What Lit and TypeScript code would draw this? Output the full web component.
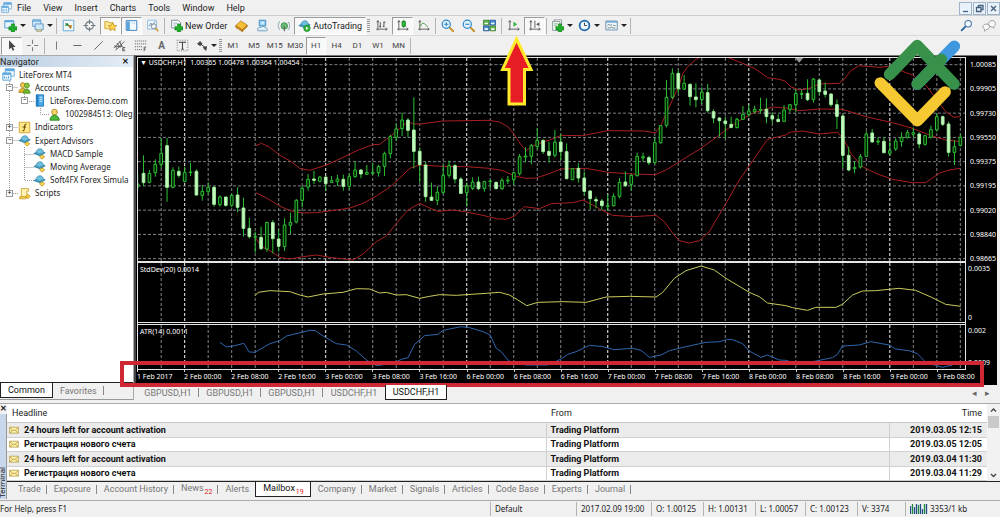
import { LitElement, html, svg, css, nothing } from "lit";
import { customElement, property } from "lit/decorators.js";
import { classMap } from "lit/directives/class-map.js";

/* ---------- icons (16 x 16 grid) ---------- */
const plus = svg`<path d="M9 6h4v3.500h3v4h-3V16H9v-2.500H6v-4h3z" fill="#1fae2b" stroke="#0b7a17" stroke-width=".7"/>`;
const cap = svg`<path d="M1 8l7-3 7 2-6 4z" fill="#4aa3c8" stroke="#1f6f94" stroke-width=".8"/><path d="M4 5.500C5 2 10 1 12 4l1 3-5 2-4-2z" fill="#6fc0de" stroke="#2a7ea5" stroke-width=".8"/>`;
const axes = svg`<path d="M3.500 2v12M1.500 12.500H15M2 4l1.500-2L5 4M13 11l2 1.500-2 1.500" fill="none" stroke="#555" stroke-width="1.100"/>`;
const lens = svg`<path d="M10 10l5 5" stroke="#c9962a" stroke-width="2.600" stroke-linecap="round"/><circle cx="6.500" cy="6.500" r="5" fill="#e3f3fd" stroke="#2f86c8" stroke-width="1.500"/>`;

const ICONS: Record<string, unknown> = {
  app: svg`<path d="M4 1h11v9H4z" fill="#fff" stroke="#4b97d2"/><path d="M4 1h11v3H4z" fill="#5da9e0"/><path d="M1 6h10v9H1z" fill="#e9f5fd" stroke="#4b97d2"/><path d="M1 6h10v2.500H1z" fill="#5da9e0"/><path d="M3 13v-3M5.500 13v-2M8 13v-3" stroke="#4b97d2"/>`,
  newChart: svg`<path d="M1 2h11v9H1z" fill="#eaf6ff" stroke="#3f8cc8"/><path d="M1 3h11" stroke="#5ca8df" stroke-width="2"/>${plus}`,
  profiles: svg`<path d="M2 1h10v8H2z" fill="#dff0fc" stroke="#4a8fc4"/><path d="M2 2.500h10" stroke="#6bb0e2" stroke-width="2"/><path d="M5 6h10v7H5z" fill="#cfe6f8" stroke="#4a8fc4"/><path d="M7 13v2h6v-2" fill="#f4e3a4" stroke="#8f8a62"/>`,
  market: svg`<path d="M1.500 1.500h13v13h-13z" fill="#f4fbff" stroke="#4b97d2"/><path d="M4 8l2.500-3 1.500 2.500z" fill="#1d9e2b" stroke="#1d9e2b"/><path d="M8 8l4 0-1.500 4z" fill="#e0a118" stroke="#c77c10"/><path d="M4 5l7 6" stroke="#557"/>`,
  target: svg`<circle cx="8" cy="8" r="4.800" fill="none" stroke="#6d7880" stroke-width="1.400"/><path d="M8 .5v5.500M8 10v5.500M.5 8H6M10 8h5.500" stroke="#6d7880" stroke-width="1.300"/>`,
  favs: svg`<path d="M1 3h4l1 1.500h5V12H1z" fill="#fbe58b" stroke="#c99c27"/><path d="M10.500 4.500l1.600 3.300 3.500.4-2.600 2.500.7 3.600-3.200-1.800-3.200 1.800.7-3.600-2.600-2.500 3.500-.4z" fill="#ffd84a" stroke="#bf8718" stroke-width=".9"/>`,
  panel: svg`<path d="M1.500 2h13v12h-13z" fill="#f3faff" stroke="#3f83bd" stroke-width="1.200"/><path d="M2 3h4v10.500H2z" fill="#5aa5de"/><path d="M8 5h5" stroke="#b6d4ea"/>`,
  tester: svg`<path d="M2 1.500h11v11H2z" fill="#eef8ff" stroke="#7fb3d9"/><path d="M4 9l2-4 2 3 3-5" fill="none" stroke="#58799a"/><circle cx="9.500" cy="9" r="3" fill="#ffffffb0" stroke="#7f8b95" stroke-width="1.200"/><path d="M12 11.500l3 3.500" stroke="#d39a2c" stroke-width="2"/>`,
  order: svg`<path d="M2 1.500h8l3 3V11H2z" fill="#fff" stroke="#6c7a86"/><path d="M4 5h5M4 7.500h3" stroke="#7f93a5"/>${plus}`,
  book: svg`<path d="M1 8l6-5.500 8 5-6 6z" fill="#f5bf3a" stroke="#a8710f" stroke-width=".9"/><path d="M1 8v2.500l8 5V13.500zM9 13.500v2l6-6V7.500z" fill="#d9912b" stroke="#a8710f" stroke-width=".8"/>`,
  server: svg`<path d="M4 1.500h8v7H4z" fill="#8fd0f5" stroke="#2b7cb8"/><path d="M6 4h4M6 6h4" stroke="#fff"/><path d="M2 14c-1-3 2-4 4-3.500 1-2 5-2 5.500.5 3 0 3.500 3 1.500 3.500H3z" fill="#dff1fb" stroke="#5a8fb3"/>`,
  signal: svg`<circle cx="9" cy="8.500" r="4" fill="#67bd72" stroke="#3d8d4b"/><path d="M3.500 3C1 6 1 10 3.500 13M14 3.500c2 3 2 7-.5 10" fill="none" stroke="#9ab4bd" stroke-width="1.300"/><path d="M9 8.500V15" stroke="#666" stroke-width="1.300"/>`,
  auto: svg`${cap}<circle cx="11" cy="11.500" r="4" fill="#2fb33c" stroke="#127d20" stroke-width=".7"/><path d="M9.800 9.500v4l3.200-2z" fill="#fff"/>`,
  bars: svg`${axes}<path d="M6.500 4v7M6.500 9H5M11 3v7M11 4h1.800M11 9H9.500" stroke="#555" stroke-width="1.200"/>`,
  candles: svg`${axes}<path d="M9.500 1v10" stroke="#0c7a18"/><path d="M7.500 3h4v6h-4z" fill="#2fbb3d" stroke="#0c7a18"/>`,
  line: svg`${axes}<path d="M4 9c3-6 5-4 9 .5" fill="none" stroke="#2f9a3b" stroke-width="1.200"/>`,
  zoomIn: svg`${lens}<path d="M4 6.500h5M6.500 4v5" stroke="#2f86c8" stroke-width="1.400"/>`,
  zoomOut: svg`${lens}<path d="M4 6.500h5" stroke="#2f86c8" stroke-width="1.400"/>`,
  tile: svg`<path d="M.5 1.500h7v6h-7zM8.500 8.500h7v6h-7z" fill="#5fb84b" stroke="#3a7a2c"/><path d="M8.500 1.500h7v6h-7zM.5 8.500h7v6h-7z" fill="#4c93d8" stroke="#234f86"/><path d="M2 5.500h4M10 5.500h4M2 12.500h4M10 12.500h4" stroke="#fff" stroke-width="2"/>`,
  scroll: svg`${axes}<path d="M8 3.500v6l4.500-3z" fill="#2fae3a"/>`,
  shift: svg`${axes}<path d="M8.500 2v9" stroke="#444"/><path d="M14 4v5l-4-2.500z" fill="#555"/>`,
  indic: svg`<path d="M4 1h9v11H4z" fill="#fff" stroke="#7a8791"/><path d="M2 3h9v11H2z" fill="#f6fbf4" stroke="#7a8791"/><path d="M4 6h4M4 8.500h3" stroke="#4a9a55"/>${plus}`,
  clock: svg`<circle cx="8" cy="8" r="6" fill="#eef8ff" stroke="#1f66ad" stroke-width="2.200"/><path d="M8 4.500V8h3" fill="none" stroke="#345" stroke-width="1.200"/>`,
  template: svg`<path d="M1 2.500h14v11H1z" fill="#eef7fd" stroke="#557f9f"/><path d="M1 3.500h14" stroke="#6fa9d4" stroke-width="2"/><path d="M3 8l2-1.500L7 8l2-1.500M10 8h3M3 11h3l2-1 2 1h3" fill="none" stroke="#566" stroke-width=".9"/>`,
  search: svg`<path d="M7 9l-5 5" stroke="#2c5f9e" stroke-width="2.200" stroke-linecap="round"/><circle cx="10" cy="5.800" r="4" fill="#f5fbff" stroke="#3f72ad" stroke-width="1.300"/>`,
  chat: svg`<path d="M10 2c4-1 6 2 5 4.500-.5 1.500-1.500 2-1.500 2v2L11.500 9C7 9 6.500 3.500 10 2z" fill="#fafafa" stroke="#8a8a8a" stroke-width=".9"/><path d="M3.500 6C7 5 9 7 8.500 9.500 8 12 6 12 5 12l-2 2v-2.500C0 10.500.5 7 3.500 6z" fill="#fafafa" stroke="#8a8a8a" stroke-width=".9"/>`,
  pointer: svg`<path d="M5 1.500v11.500l2.700-2.500 1.800 4 2-.9-1.800-3.800h3.500z" fill="#444"/>`,
  cross: svg`<path d="M8 1v5M8 10v5M1 8h5M10 8h5" stroke="#7d7d7d" stroke-width="1.300"/>`,
  vline: svg`<path d="M8 3v10" stroke="#777" stroke-width="1.200"/>`,
  hline: svg`<path d="M3 8h10" stroke="#666" stroke-width="1.300"/>`,
  trend: svg`<path d="M3 13L13 3" stroke="#666" stroke-width="1.200"/>`,
  channel: svg`<path d="M1 11l9-9M3 14L14 3M2 8l3 4M5 5l4 6M8 3l3 6M3 9h9" stroke="#444" fill="none"/><path d="M15 10.500h-3v4h3M12 12.500h2.500" stroke="#444" fill="none"/>`,
  fibo: svg`<path d="M1 2.500h14M1 6h14M1 9.500h9M1 13h9" stroke="#555" stroke-dasharray="1.500 1"/><path d="M15 10h-2.500v5M12.500 12.500h2" stroke="#444" fill="none"/>`,
  label: svg`<path d="M1.500 1.500h13v13h-13z" fill="none" stroke="#777" stroke-dasharray="1.500 1.500"/><path d="M4.500 5V4h7v1M8 4v8.500M6.500 12.500h3" fill="none" stroke="#444" stroke-width="1.300"/>`,
  arrows: svg`<path d="M2 6l3-3 2.500 3L5 8zM5 6l6 4M9 10.500l4-1-1 4.500z" fill="#444" stroke="#444" stroke-width="1.200"/>`,
  accounts: svg`<circle cx="6" cy="5" r="3" fill="#f3c94b" stroke="#a5821a"/><path d="M1 14c0-6 9-7 10 0z" fill="#e9b52e" stroke="#a5821a"/><circle cx="11" cy="5.500" r="3" fill="#8cc63e" stroke="#4f8d1c"/><path d="M6.500 15c0-7 8-7 8.500 0z" fill="#6fb52c" stroke="#4f8d1c"/>`,
  host: svg`<path d="M4 1h9v14H4z" fill="#45a8e6" stroke="#1c6fae"/><path d="M4 1h2.500v14H4z" fill="#1f7cc0"/><path d="M8 4h3.500M8 6.500h3.500M8 9h3.500" stroke="#dff3ff" stroke-width="1.200"/>`,
  user: svg`<circle cx="8" cy="5" r="3.500" fill="#f6d36a" stroke="#a5821a"/><path d="M2.500 15c0-8 11-8 11.500 0z" fill="#4cb83a" stroke="#23801b"/>`,
  fx: svg`<path d="M1.500 1.500h13v13h-13z" fill="#ffe88a" stroke="#c79a1e"/><path d="M10.500 4c-2-.5-2.200 1-2.500 4s-.5 4.500-2.500 4M5.500 7.500h4.500" fill="none" stroke="#6a4a00" stroke-width="1.300"/>`,
  expert: svg`${cap}<path d="M11 9.500l3.500 2.500-3.500 3-3-3z" fill="#f8d451" stroke="#b98a17" stroke-width=".9"/>`,
  script: svg`<path d="M4 2h9v3h-2v7H4z" fill="#fff3b8" stroke="#c79a1e"/><path d="M2 12h8v2.500H2z" fill="#f7d75e" stroke="#c79a1e"/><path d="M12 9l3 2.500-3 3-2.500-3z" fill="#f8c93a" stroke="#b98a17" stroke-width=".9"/>`,
  mail: svg`<path d="M1 3.500h14V13H1z" fill="#fdf0a8" stroke="#a3862c"/><path d="M1 13l5-4.500h4l5 4.500M1 4l5 4.500M15 4l-5 4.500" fill="none" stroke="#a3862c"/>`,
};

@customElement("mt-icon")
class MtIcon extends LitElement {
  @property() name = "";
  static styles = css`
    :host { display: block; flex: none; width: 13px; height: 13px; }
    svg { display: block; width: 100%; height: 100%; }
  `;
  render() {
    return html`<svg viewBox="0 0 16 16" aria-hidden="true">${ICONS[this.name]}</svg>`;
  }
}

/* ---------- market data, in thirds of a pixel on the plot ---------- */
/* high, body top, body bottom, low; 1 = bearish (filled) */
const CANDLES: number[][] = [
  [370,402,410,420,0],[316,370,398,408,1],[360,370,397,400,0],[328,343,368,380,0],[264,310,343,355,0],[264,287,412,455,1],[352,361,412,415,0],[350,364,376,383,1],
  [350,367,394,397,0],[338,366,368,378,0],[358,364,435,437,1],[405,424,436,452,0],[397,412,425,432,0],[408,412,463,470,1],[436,441,464,470,0],[441,441,466,470,1],
  [432,436,466,472,0],[412,435,472,487,1],[443,474,535,560,1],[503,535,560,566,1],[545,560,562,608,0],[530,562,596,600,1],[516,517,597,605,0],[510,518,566,610,1],
  [538,567,589,605,1],[505,525,590,603,0],[488,517,526,552,0],[447,451,516,520,0],[408,415,451,472,0],[372,388,411,422,0],[362,387,391,402,1],[378,381,394,397,0],
  [380,381,401,422,1],[378,392,397,399,0],[374,387,395,408,0],[374,388,409,422,1],[370,380,409,420,0],[334,360,380,383,0],[357,360,372,385,1],[345,367,373,375,0],
  [338,367,370,375,0],[345,349,368,380,0],[305,311,349,378,0],[254,260,311,325,0],[222,237,262,273,0],[188,210,236,258,0],[204,210,241,262,1],[142,240,304,355,1],
  [292,304,344,398,1],[335,345,440,455,1],[398,441,451,453,1],[408,427,451,465,0],[345,376,427,432,0],[332,347,376,383,0],[342,347,387,400,1],[381,387,430,432,1],
  [398,408,428,470,0],[382,396,415,420,0],[380,396,416,420,1],[392,395,416,425,0],[388,393,395,415,0],[395,397,416,418,1],[384,391,416,420,0],[378,390,393,402,0],
  [365,368,389,405,0],[312,320,371,377,0],[292,318,321,337,0],[282,287,319,343,0],[235,271,290,298,0],[268,271,305,312,1],[275,304,316,338,1],[240,276,316,322,0],
  [252,276,305,330,1],[280,305,386,388,1],[355,356,389,391,0],[340,355,384,398,1],[365,384,424,437,1],[420,423,446,478,1],[440,449,453,475,1],[447,453,467,480,1],
  [432,467,470,483,0],[430,439,467,470,0],[384,397,439,445,0],[364,396,407,411,1],[375,376,403,422,0],[308,319,377,380,0],[308,320,324,335,0],[317,323,338,345,1],
  [262,278,338,343,0],[225,227,278,281,0],[90,142,226,232,0],[55,70,142,147,0],[62,70,116,130,1],[75,100,117,120,0],[100,103,140,167,1],[100,141,149,172,1],
  [112,126,149,162,0],[102,128,182,188,1],[178,185,204,220,1],[202,204,212,260,1],[200,213,221,265,1],[200,223,232,235,1],[203,208,233,235,0],[168,193,208,210,0],
  [165,183,193,200,0],[167,178,185,190,0],[143,178,181,190,0],[145,178,200,220,1],[187,197,207,220,1],[193,208,215,216,1],[165,180,214,217,0],[163,164,179,187,0],
  [118,130,164,187,0],[118,130,133,147,0],[88,130,149,153,1],[84,87,149,158,0],[88,90,125,135,1],[98,123,133,142,1],[130,132,164,170,1],[148,164,199,237,1],
  [193,198,316,355,1],[290,316,360,364,1],[335,352,356,370,0],[312,320,351,356,0],[244,252,319,320,0],[237,249,276,278,1],[262,273,276,285,0],[262,274,308,310,1],
  [272,302,310,318,0],[265,273,297,303,0],[247,262,275,290,0],[240,248,263,265,0],[232,248,253,262,0],[247,252,282,295,1],[255,257,283,287,0],[227,239,262,265,0],
  [190,200,240,245,0],[197,200,223,228,1],[215,222,307,320,1],[270,290,307,345,0],[252,262,286,290,0],
];
const UPPER = "354,287 371,280 396,292 426,316 456,332 486,355 516,361 566,345 616,322 666,298 706,284 726,283 776,245 811,215 828,222 848,222 916,213 1056,211 1086,216 1111,230 1131,255 1151,285 1166,302 1186,288 1216,276 1236,270 1271,256 1336,257 1411,242 1521,243 1554,249 1571,225 1596,170 1626,105 1636,72 1651,50 1676,28 1700,14 1740,10 1776,24 1826,44 1856,58 1891,83 1926,88 1941,92 1961,110 1986,120 2016,115 2046,102 2106,100 2121,88 2141,62 2166,47 2226,52 2266,48 2286,60 2326,75 2366,105 2396,145 2426,185 2451,202 2470,200";
const MIDDLE = "354,428 386,444 426,468 456,482 496,489 536,488 596,480 636,474 676,460 716,438 756,412 786,385 816,355 846,345 916,349 986,350 1056,355 1096,362 1131,378 1166,385 1196,384 1226,374 1271,357 1346,355 1411,367 1486,372 1554,374 1586,360 1626,335 1686,298 1726,270 1766,240 1806,212 1846,190 1906,171 1956,175 1986,182 2046,177 2116,178 2186,200 2266,218 2326,235 2386,258 2426,270 2470,275";
const LOWER = "352,562 371,590 396,602 426,622 456,627 496,620 536,615 576,622 646,630 676,612 716,575 746,558 776,520 811,480 846,460 876,474 901,484 946,480 986,486 1036,496 1076,506 1106,508 1131,498 1161,470 1206,476 1241,461 1306,458 1336,450 1366,465 1396,482 1426,496 1486,500 1556,496 1581,515 1606,550 1626,572 1656,579 1686,572 1716,545 1766,460 1806,390 1841,340 1891,268 1946,255 1956,247 1996,243 2046,252 2101,247 2121,270 2141,310 2176,350 2216,370 2266,388 2326,398 2366,398 2406,370 2436,360 2470,355";
const STDDEV = "352,122 361,112 396,107 456,110 486,120 511,126 556,117 616,112 656,101 696,102 726,114 746,112 776,120 806,119 846,130 876,124 906,119 956,121 1046,115 1086,112 1116,120 1141,135 1168,152 1201,142 1276,140 1346,142 1406,126 1476,124 1556,126 1576,112 1611,70 1646,47 1691,33 1731,45 1766,70 1836,112 1866,125 1891,144 1946,152 1966,158 2011,166 2036,157 2096,157 2116,148 2146,120 2176,108 2216,107 2286,100 2336,106 2386,128 2426,148 2471,154";
const ATR = "246,262 266,276 291,272 318,265 334,291 351,292 396,266 426,257 446,243 516,226 533,227 556,243 596,266 626,270 656,288 686,315 716,332 766,325 791,313 811,308 831,268 861,242 901,238 916,226 971,215 996,218 1036,230 1058,240 1076,280 1091,290 1114,318 1166,330 1231,330 1271,312 1291,298 1316,290 1356,271 1396,275 1430,284 1486,280 1511,286 1536,307 1571,300 1596,287 1646,275 1706,262 1746,260 1771,253 1786,254 1816,266 1836,288 1871,307 1891,300 1926,315 1946,316 1986,328 2036,318 2086,308 2101,298 2116,273 2166,270 2201,260 2256,270 2276,282 2316,287 2341,296 2366,322 2416,337 2446,330";

const PRICES = ["1.00085", "0.99905", "0.99730", "0.99550", "0.99375", "0.99195", "0.99020", "0.98840", "0.98665"];
const TIMES = ["1 Feb 2017", "2 Feb 00:00", "2 Feb 08:00", "2 Feb 16:00", "3 Feb 00:00", "3 Feb 08:00", "3 Feb 16:00", "6 Feb 00:00", "6 Feb 08:00", "6 Feb 16:00", "7 Feb 00:00", "7 Feb 08:00", "7 Feb 16:00", "8 Feb 00:00", "8 Feb 08:00", "8 Feb 16:00", "9 Feb 00:00", "9 Feb 08:00"];

@customElement("price-chart")
class PriceChart extends LitElement {
  static styles = css`
    :host { display: block; background: #000; color: #fff; font: 7px/10px "Noto Sans", sans-serif; border-top: 1px solid #777; border-left: 2px solid #444; padding: 1px 0 0 1px; }
    .row { display: grid; grid-template-columns: minmax(0, 1fr) 31px; }
    .plot { position: relative; border: 0 solid #e4e4e4; border-width: 0 1px 2px 1px; }
    .price .plot { border-top-width: 1px; }
    .std .plot { border-bottom: 3px double #e4e4e4; }
    .atr .plot { border-bottom-width: 1px; }
    .plot svg { display: block; width: 100%; height: 203px; }
    .std .plot svg { height: 59px; }
    .atr .plot svg { height: 44px; }
    .caption { position: absolute; left: 2px; top: 0; white-space: pre; }
    .std .caption, .atr .caption { top: 2px; }
    .scale { display: flex; flex-direction: column; justify-content: space-between; line-height: 4px; padding: 6px 0 2px 4px; }
    .std .scale, .atr .scale { padding: 4px 0 5px 2px; }
    .times { display: grid; grid-template-columns: repeat(17, 5.68%) auto; height: 15px; }
    .times span { white-space: nowrap; line-height: 13px; position: relative; }
    .times span::before { content: ""; position: absolute; left: 0; top: 0; width: 1px; height: 2px; background: #ccc; }
    .g, .h, .day, .c, .ln { vector-effect: non-scaling-stroke; fill: none; }
    .g, .h, .day { shape-rendering: crispEdges; }
    .g { stroke: #858585; stroke-dasharray: 3 2; }
    .h { stroke: #7c8288; stroke-dasharray: 3 2; }
    .day { stroke: #f4f4f4; stroke-dasharray: 3 2; }
    .c { stroke: #2cc135; }
    .up { fill: #020; }
    .down { fill: #c6fac1; stroke: #a4f0a0; }
    .red { stroke: #a81f22; }
    .yel { stroke: #c9cc5c; }
    .blue { stroke: #2f66ad; }
  `;
  private grid(top: number, bottom: number) {
    return Array.from({ length: 35 }, (_, i) => {
      const x = (i + 1) * 70.6 - 1;
      return svg`<path class=${(i + 1) % 6 === 2 ? "day" : "g"} d="M${x} ${top}V${bottom}"/>`;
    });
  }
  render() {
    return html`
      <div class="row price">
        <div class="plot">
          <svg viewBox="0 24 2484 609" preserveAspectRatio="none" role="img" aria-label="USDCHF hourly candles">
            ${this.grid(24, 633)}
            ${PRICES.map((_, i) => svg`<path class="h" d="M${i === 0 ? 500 : 0} ${44 + i * 72.750}H2484"/>`)}
            ${[UPPER, MIDDLE, LOWER].map((p) => svg`<polyline class="ln red" points=${p}/>`)}
            ${CANDLES.map(([hi, a, b, lo, bear], i) => {
              const x = i * 17.650 - 1;
              return svg`<path class="c" d="M${x} ${hi}V${a}M${x} ${b}V${lo}"/><path class=${bear ? "c down" : "c up"} d="M${x - 4} ${a}h8V${b}h-8z"/>`;
            })}
            <path d="M1974 24h24l-12 14z" fill="#999"/>
          </svg>
          <div class="caption">▼ USDCHF,H1  1.00365 1.00478 1.00364 1.00454</div>
        </div>
        <div class="scale">${PRICES.map((p) => html`<span>${p}</span>`)}</div>
      </div>
      <div class="row std">
        <div class="plot">
          <svg viewBox="0 24 2484 177" preserveAspectRatio="none" role="img" aria-label="Standard deviation">
            ${this.grid(24, 201)}<polyline class="ln yel" points=${STDDEV}/>
          </svg>
          <div class="caption">StdDev(20) 0.0014</div>
        </div>
        <div class="scale"><span>0.0035</span><span>0</span></div>
      </div>
      <div class="row atr">
        <div class="plot">
          <svg viewBox="0 210 2484 132" preserveAspectRatio="none" role="img" aria-label="Average true range">
            ${this.grid(210, 342)}<polyline class="ln blue" points=${ATR}/>
          </svg>
          <div class="caption">ATR(14) 0.0011</div>
        </div>
        <div class="scale"><span>0.002</span><span>0.0009</span></div>
      </div>
      <div class="row"><div class="times">${TIMES.map((t) => html`<span>${t}</span>`)}</div></div>
    `;
  }
}

/* ---------- window data ---------- */
type Tool = [string, string, string?];
const SEP: Tool = ["|", ""];
const GRIP: Tool = [":", ""];
const TOOLS: Tool[] = [
  ["newChart", "New chart", "drop"], ["profiles", "Profiles", "drop"], SEP,
  ["market", "Market Watch"], ["target", "Data Window"], ["favs", "Navigator", "on"], ["panel", "Terminal", "on"], ["tester", "Strategy Tester"], SEP,
  ["order", "New Order", "text"], ["book", "MetaEditor"], ["server", "Hosting"], ["signal", "Signals"], ["auto", "AutoTrading", "text on"], GRIP,
  ["bars", "Bar Chart"], ["candles", "Candlesticks", "on"], ["line", "Line Chart"], SEP,
  ["zoomIn", "Zoom In"], ["zoomOut", "Zoom Out"], ["tile", "Tile Windows"], SEP,
  ["scroll", "Auto Scroll"], ["shift", "Chart Shift", "on"], SEP,
  ["indic", "Indicators", "drop"], ["clock", "Periods", "drop"], ["template", "Templates", "drop"], SEP,
];
const DRAW: Tool[] = [
  ["pointer", "Cursor", "on"], ["cross", "Crosshair"], SEP,
  ["vline", "Vertical Line"], ["hline", "Horizontal Line"], ["trend", "Trendline"], ["channel", "Equidistant Channel"], ["fibo", "Fibonacci"],
  ["", "A", "glyph"], ["label", "Text Label"], ["arrows", "Arrows", "drop"], GRIP,
];
const NODES: [number, string, string, string?][] = [
  [0, "app", "LiteForex MT4"], [1, "accounts", "Accounts", "−"], [2, "host", "LiteForex-Demo.com", "−"], [3, "user", "1002984513: Oleg"],
  [1, "fx", "Indicators", "+"], [1, "expert", "Expert Advisors", "−"], [2, "expert", "MACD Sample"], [2, "expert", "Moving Average"],
  [2, "expert", "Soft4FX Forex Simula"], [1, "script", "Scripts", "+"],
];
const MAILS = [
  ["24 hours left for account activation", "Trading Platform", "2019.03.05 12:15"],
  ["Регистрация нового счета", "Trading Platform", "2019.03.05 12:05"],
  ["24 hours left for account activation", "Trading Platform", "2019.03.04 11:30"],
  ["Регистрация нового счета", "Trading Platform", "2019.03.04 11:29"],
];
const TERM_TABS: [string, string?][] = [["Trade"], ["Exposure"], ["Account History"], ["News", "22"], ["Alerts"], ["Mailbox", "19"], ["Company"], ["Market"], ["Signals"], ["Articles"], ["Code Base"], ["Experts"], ["Journal"]];
const BARS = [8, 10, 7, 10, 9, 10, 5, 10, 10];

@customElement("app-root")
class AppRoot extends LitElement {
  static styles = css`
    :host { display: block; position: relative; overflow: hidden; background: #f0f0f0; color: #1c1c1c; font: 9px/12px Roboto, sans-serif; }
    * { box-sizing: border-box; }
    button { font: inherit; color: inherit; background: none; border: 0; padding: 0; margin: 0; white-space: nowrap; }
    .menubar { display: flex; align-items: center; gap: 12px; height: 15px; padding-left: 1px; }
    .menubar mt-icon { width: 11px; height: 11px; margin-right: -7px; }
    .wins { display: flex; gap: 1px; margin-left: auto; padding-top: 1px; }
    .wins button { width: 13px; height: 13px; border: 1px solid #9db4cb; background: #e9f2fb; }
    .wins svg { display: block; width: 11px; height: 11px; }
    .tools { display: flex; align-items: center; height: 20px; border-top: 1px solid #ccc; padding-left: 1px; }
    .draw { border-top-color: #dadada; }
    .tool { display: flex; align-items: center; justify-content: center; width: 21px; height: 18px; border: 1px solid transparent; }
    .drop { width: 27px; gap: 3px; justify-content: flex-start; padding-left: 2px; }
    .draw .drop { width: 25px; gap: 2px; }
    .drop::after { content: ""; border: 3px solid transparent; border-top: 3px solid #222; border-bottom: 0; }
    .text { width: auto; gap: 2px; padding: 0 3px; }
    .on { background: #f8f8f8; border-color: #9b9b9b #fff #fff #9b9b9b; }
    .glyph { font: 700 10px/14px Roboto, sans-serif; color: #666; }
    .sep { width: 1px; height: 16px; background: #b4b4b4; margin: 0 1px; }
    .grip { width: 3px; height: 14px; margin: 0 1px; background: repeating-linear-gradient(#999 0 1px, transparent 1px 2px); }
    .right { display: flex; gap: 8px; margin-left: auto; padding-right: 3px; }
    .right mt-icon:last-child { width: 16px; height: 14px; }
    .periods { display: flex; width: 186px; font-size: 8px; color: #444; }
    .periods button { flex: 1; height: 18px; border: 1px solid transparent; }
    .periods .on { border-color: #9b9b9b #fff #fff #9b9b9b; }

    .work { display: grid; grid-template-columns: 134px minmax(0, 1fr) 3px; }
    .nav { display: flex; flex-direction: column; border-right: 1px solid #aaa; border-top: 1px solid #aaa; background: #fff; min-width: 0; margin-bottom: 3px; }
    .title { display: flex; justify-content: space-between; align-items: center; height: 11px; padding: 0 4px 0 0; background: linear-gradient(90deg, #bccfe2, #e4edf6); }
    .title button { font-weight: 700; font-size: 8px; }
    .tree { position: relative; display: grid; grid-auto-rows: 1fr; height: 132px; margin: 1px 0 0; padding: 0; list-style: none; flex: none; font: 8px/12px "Noto Sans", sans-serif; }
    .tree li { display: flex; align-items: center; gap: 4px; white-space: nowrap; position: relative; }
    .l0 { padding-left: 2px; }
    .l1 { padding-left: 18px; }
    .l2 { padding-left: 33px; }
    .l3 { padding-left: 48px; }
    .lines { position: absolute; left: 0; top: 0; width: 60px; height: 132px; }
    .exp { position: absolute; width: 7px; height: 7px; border: 1px solid #9a9a9a; background: #fff; font: 7px/5px Roboto, sans-serif; }
    .l1 .exp { left: 6px; }
    .l2 .exp { left: 21px; }
    .tabs { display: flex; background: #f0f0f0; color: #777; align-items: stretch; }
    .tabs button { height: 15px; padding: 0 7px; position: relative; }
    .tabs button::after { content: ""; position: absolute; right: 0; top: 3px; height: 9px; width: 1px; background: #888; }
    .tabs .cur { background: #fff; color: #111; border: 1px solid #222; border-top: 0; }
    .tabs .cur::after, .tabs .prev::after { display: none; }
    .navtabs { margin-top: auto; border-top: 1px solid #222; height: 18px; border-bottom: 1px solid #999; }
    .charttabs { padding: 0 3px; height: 18px; }
    .charttabs button { width: 62px; padding: 0; }
    .charttabs .arrow { width: 13px; color: #666; }
    .charttabs .arrow::after { display: none; }
    .charttabs .first { margin-left: auto; }
    .mark { position: absolute; left: -14px; right: 13px; bottom: -2px; height: 26px; border: 4px solid #cf2734; }
    .chartbox { position: relative; }

    .term { display: grid; grid-template-columns: 7px minmax(0, 1fr); border-top: 1px solid #aaa; }
    .side { display: flex; flex-direction: column; background: #c7d8ea; align-items: center; justify-content: space-between; border-right: 1px solid #999; }
    .side button { font: 700 8px/10px Roboto, sans-serif; background: #f0f0f0; width: 7px; }
    .side span { writing-mode: vertical-rl; transform: rotate(180deg); font-size: 8px; line-height: 8px; }
    .list { display: grid; grid-template-columns: minmax(0, 1fr) 13px; border-bottom: 1px solid #222; background: #fff; }
    table { width: 100%; border-collapse: collapse; table-layout: fixed; }
    th { font-weight: 400; text-align: left; height: 18px; padding: 0 5px; border-bottom: 1px solid #c8c8c8; }
    td { height: 15px; padding: 0 4px; font-weight: 700; border-bottom: 1px solid #d0d0d0; border-left: 1px solid #d0d0d0; color: #111; }
    td:first-child { border-left: 0; }
    th:first-child { width: 55%; }
    th:nth-child(2) { width: 35%; }
    th:last-child, td:last-child { text-align: right; padding-right: 5px; }
    tr:nth-child(odd) td { background: #ebebeb; }
    tr:nth-child(even) td { height: 14px; }
    td:first-child, th:first-child { padding-left: 5px; }
    .cell { display: flex; align-items: center; gap: 5px; margin-left: -3px; }
    .cell mt-icon { width: 10px; height: 10px; }
    .bar { display: flex; flex-direction: column; background: #f2f2f2; align-items: center; }
    .bar svg { width: 11px; height: 12px; }
    .bar i { width: 11px; height: 12px; background: #c9c9c9; margin-bottom: auto; }
    .termtabs { height: 17px; padding-left: 4px; }
    .termtabs button { padding: 0 6px 0 7px; }
    sub { font-size: 7px; line-height: 7px; color: #d22; vertical-align: -3px; margin-left: 1px; }
    .status { display: grid; grid-template-columns: minmax(0, 490fr) 86fr 75fr 52fr 52fr 50fr 52fr 48fr 95fr; height: 17px; margin-top: 1px; border-top: 1px solid #aaa; align-items: center; white-space: nowrap; font: 8px/14px "Noto Sans", sans-serif; }
    .status span { border-left: 1px solid #b4b4b4; padding-left: 4px; display: flex; align-items: center; gap: 2px; }
    .status span:first-child { border: 0; padding: 0; }
    .status svg { width: 18px; height: 10px; }

    .pin { position: absolute; left: 500px; top: 34px; width: 34px; height: 72px; pointer-events: none; }
    .logo { position: absolute; right: 38px; top: 38px; width: 88px; height: 90px; pointer-events: none; }
  `;

  private tool([name, label, kind = ""]: Tool) {
    if (name === "|") return html`<span class="sep"></span>`;
    if (name === ":") return html`<span class="grip"></span>`;
    const has = (k: string) => kind.includes(k);
    return html`<button class=${classMap({ tool: true, on: has("on"), drop: has("drop"), text: has("text"), glyph: has("glyph") })} aria-label=${label}>
      ${has("glyph") ? label : html`<mt-icon name=${name}></mt-icon>`}${has("text") ? label : nothing}
    </button>`;
  }

  render() {
    return html`
      <nav class="menubar">
        <mt-icon name="app"></mt-icon>
        ${["File", "View", "Insert", "Charts", "Tools", "Window", "Help"].map((m) => html`<button>${m}</button>`)}
        <div class="wins">
          ${["M3 8.500h5", "M4.500 4V2.500h4.500v4H7.500M2.500 4.500h4.500v4H2.500z", "M3 3l5 5M8 3L3 8"].map((d, i) => html`
            <button aria-label=${["Minimize", "Restore", "Close"][i]}><svg viewBox="0 0 11 11"><path d=${d} fill="none" stroke="#44607c" stroke-width="1.300"/></svg></button>`)}
        </div>
      </nav>
      <div class="tools">${TOOLS.map((t) => this.tool(t))}
        <div class="right"><mt-icon name="search"></mt-icon><mt-icon name="chat"></mt-icon></div>
      </div>
      <div class="tools draw">${DRAW.map((t) => this.tool(t))}
        <div class="periods">${["M1", "M5", "M15", "M30", "H1", "H4", "D1", "W1", "MN"].map((p) => html`<button class=${p === "H1" ? "on" : ""}>${p}</button>`)}</div>
        <span class="sep"></span>
      </div>

      <div class="work">
        <aside class="nav">
          <div class="title"><span>Navigator</span><button aria-label="Close navigator">✕</button></div>
          <ul class="tree">
            <svg class="lines" viewBox="0 0 60 132"><path d="M9.500 13V125.500H18M9.500 19.500H18M9.500 59.500H18M9.500 72.500H18M24.500 26V33.500H34M40.500 40V46.500H49M24.500 79V112.500H34M24.500 86.500H34M24.500 99.500H34" fill="none" stroke="#999" stroke-dasharray="1 1"/></svg>
            ${NODES.map(([lvl, icon, text, exp]) => html`<li class="l${lvl}">${exp ? html`<button class="exp" aria-label="Toggle ${text}">${exp}</button>` : nothing}<mt-icon name=${icon}></mt-icon><span>${text}</span></li>`)}
          </ul>
          <div class="tabs navtabs"><button class="cur">Common</button><button>Favorites</button></div>
        </aside>
        <div>
          <div class="chartbox"><price-chart></price-chart><div class="mark"></div></div>
          <div class="tabs charttabs">
            ${["GBPUSD,H1", "GBPUSD,H1", "GBPUSD,H1", "USDCHF,H1", "USDCHF,H1"].map((t, i) => html`<button class=${i === 4 ? "cur" : i === 3 ? "prev" : ""}>${t}</button>`)}
            <button class="arrow first" aria-label="Previous">◂</button><button class="arrow" aria-label="Next">▸</button>
          </div>
        </div>
      </div>

      <section class="term">
        <div class="side"><button aria-label="Close terminal">✕</button><span>Terminal</span></div>
        <div>
          <div class="list">
            <table>
              <thead><tr><th>Headline</th><th>From</th><th>Time</th></tr></thead>
              <tbody>${MAILS.map(([h, f, t]) => html`<tr><td><div class="cell"><mt-icon name="mail"></mt-icon>${h}</div></td><td>${f}</td><td>${t}</td></tr>`)}</tbody>
            </table>
            <div class="bar">
              <svg viewBox="0 0 11 12"><path d="M3 7.500L5.500 5 8 7.500" fill="none" stroke="#444" stroke-width="1.300"/></svg><i></i>
              <svg viewBox="0 0 11 12"><path d="M3 5l2.500 2.500L8 5" fill="none" stroke="#444" stroke-width="1.300"/></svg>
            </div>
          </div>
          <div class="tabs termtabs">${TERM_TABS.map(([t, n]) => html`<button class=${t === "Mailbox" ? "cur" : t === "Alerts" ? "prev" : ""}>${t}${n ? html`<sub>${n}</sub>` : nothing}</button>`)}</div>
        </div>
      </section>
      <footer class="status">
        <span>For Help, press F1</span><span>Default</span><span>2017.02.09 19:00</span><span>O: 1.00125</span><span>H: 1.00131</span><span>L: 1.00057</span><span>C: 1.00123</span><span>V: 3374</span>
        <span><svg viewBox="0 0 18 10">${BARS.map((h, i) => svg`<path d="M${i * 2 + 0.500} ${10 - h}V10" stroke=${i % 3 === 1 ? "#1e8a3a" : "#1f4e86"} stroke-width="1.300"/>`)}</svg>3353/1 kb</span>
      </footer>

      <svg class="pin" viewBox="500 34 34 72"><path d="M516.500 39L531 69.500h-6.500V104h-15.500V69.500H502.500z" fill="#e81c24" stroke="#ffe92b" stroke-width="3"/></svg>
      <svg class="logo" viewBox="282 114 264 270" fill="none" stroke-width="35" stroke-linecap="round" stroke-linejoin="round">
        <path d="M412 252L523 139" stroke="#3f97de"/>
        <path d="M484 178L412 252" stroke="#37914a"/><path d="M329 223l83-86 110 115" stroke="#37914a"/>
        <path d="M301 249l111 113 83-86" stroke="#f6c832"/>
      </svg>
    `;
  }
}
